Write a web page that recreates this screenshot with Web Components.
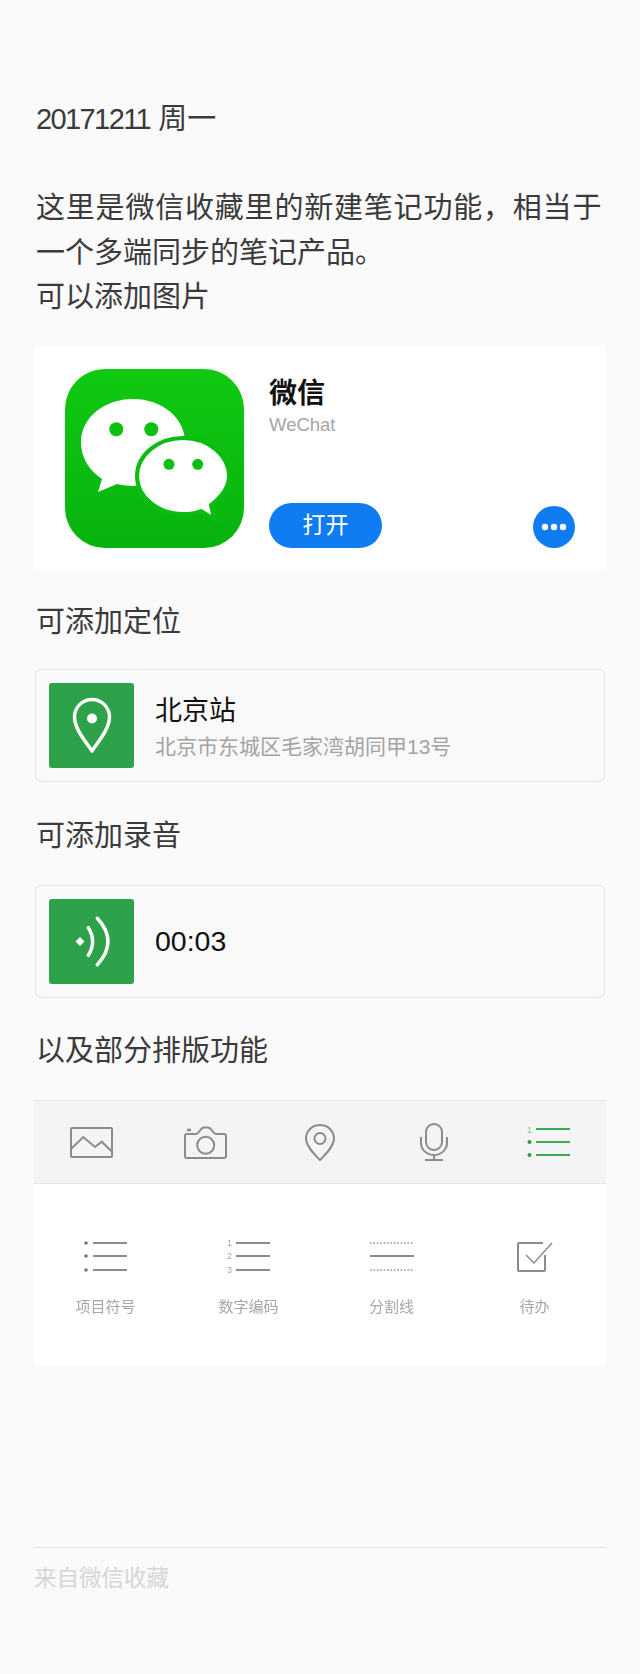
<!DOCTYPE html>
<html lang="zh">
<head>
<meta charset="utf-8">
<title>笔记</title>
<style>
    html, body {
        margin: 0;
        background: #fafafa;
    }
    body {
        font-family: "Liberation Sans", "Noto Sans CJK SC", sans-serif;
    }
</style>
</head>
<body>
<note-page>
    <note-text class="intro"><span class="digits">20171211</span> 周一<br><br><span class="wide">这里是微信收藏里的新建笔记功能，相当于</span><br>一个多端同步的笔记产品。<br>可以添加图片</note-text>
    <app-card name="微信" sub="WeChat" action="打开"></app-card>
    <note-text class="place">可添加定位</note-text>
    <attach-card kind="place">
        <div class="title">北京站</div>
        <div class="sub">北京市东城区毛家湾胡同甲13号</div>
    </attach-card>
    <note-text>可添加录音</note-text>
    <attach-card kind="voice">
        <div class="title time">00:03</div>
    </attach-card>
    <note-text>以及部分排版功能</note-text>
    <format-panel></format-panel>
    <note-footer>来自微信收藏</note-footer>
</note-page>

<script>
class NotePage extends HTMLElement {
    constructor() {
        super();
        this.attachShadow({mode: 'open'});
        this.shadowRoot.innerHTML = `
            <style>
                :host {
                    display: flex;
                    flex-direction: column;
                    box-sizing: border-box;
                    width: 640px;
                    height: 1674px;
                    padding: 97px 34px 0;
                    background: #fafafa;
                }
            </style>
            <slot></slot>
        `;
    }
}

class NoteText extends HTMLElement {
    constructor() {
        super();
        this.attachShadow({mode: 'open'});
        this.shadowRoot.innerHTML = `
            <style>
                :host {
                    display: block;
                    margin: 31.5px 0 26.5px 2px;
                    font-size: 29px;
                    line-height: 44.5px;
                    color: #3a3a3a;
                    white-space: nowrap;
                }
                :host(.intro) {
                    margin: 0 0 25px 2px;
                }
                :host(.place) {
                    margin: 30px 0 25px 2px;
                }
                ::slotted(.digits) {
                    letter-spacing: -1.6px;
                }
                ::slotted(.wide) {
                    letter-spacing: 0.8px;
                }
            </style>
            <slot></slot>
        `;
    }
}

class AppCard extends HTMLElement {
    constructor() {
        super();
        this.attachShadow({mode: 'open'});
        this.shadowRoot.innerHTML = `
            <style>
                :host {
                    display: flex;
                    height: 225px;
                    box-sizing: border-box;
                    padding: 24px 0 0 31px;
                    gap: 25px;
                    background: #fff;
                }
                svg {
                    display: block;
                    flex: none;
                }
                .info {
                    display: flex;
                    flex-direction: column;
                    width: 306px;
                    height: 179px;
                }
                .name {
                    font-size: 28px;
                    line-height: 36px;
                    margin-top: 7px;
                    font-weight: 700;
                    color: #111;
                }
                .sub {
                    font-size: 18.5px;
                    line-height: 24px;
                    margin-top: 1px;
                    color: #a6a6a6;
                }
                .row {
                    display: flex;
                    justify-content: space-between;
                    align-items: flex-end;
                    margin-top: auto;
                }
                .open {
                    width: 113px;
                    height: 45px;
                    line-height: 45px;
                    border-radius: 23px;
                    background: #0f7cf2;
                    color: #fff;
                    font-size: 23px;
                    text-align: center;
                }
            </style>
            <svg width="179" height="179" viewBox="0 0 179 179">
                <defs>
                    <linearGradient id="g" x1="0" y1="0" x2="0" y2="1">
                        <stop offset="0" stop-color="#10c912"/>
                        <stop offset="1" stop-color="#07b30e"/>
                    </linearGradient>
                </defs>
                <rect width="179" height="179" rx="40" fill="url(#g)"/>
                <path fill="#fff" d="M68 30C39 30 16 49 16 73C16 89 24 101 37 110L33 123L52 115C57 116 63 117 68 117C95 117 120 98 120 73C120 49 97 30 68 30Z"/>
                <path fill="#fff" stroke="#0bbd12" stroke-width="4" d="M118 69C93 69 72 86 72 107C72 128 93 145 118 145C125 145 131 144 136 142L149 150L146 136C155 129 164 119 164 107C164 86 143 69 118 69Z"/>
                <circle cx="51.3" cy="60.3" r="7" fill="#0cc012"/>
                <circle cx="86.3" cy="60.3" r="7" fill="#0cc012"/>
                <circle cx="104" cy="95.3" r="5.5" fill="#0cc012"/>
                <circle cx="132.7" cy="95.3" r="5.5" fill="#0cc012"/>
            </svg>
            <div class="info">
                <div class="name"></div>
                <div class="sub"></div>
                <div class="row">
                    <div class="open"></div>
                    <svg width="42" height="42" viewBox="0 0 42 42">
                        <circle cx="21" cy="21" r="21" fill="#0f7cf2"/>
                        <circle cx="12" cy="21" r="3.2" fill="#fff"/>
                        <circle cx="21" cy="21" r="3.2" fill="#fff"/>
                        <circle cx="30" cy="21" r="3.2" fill="#fff"/>
                    </svg>
                </div>
            </div>
        `;
    }

    connectedCallback() {
        this.shadowRoot.querySelector('.name').textContent = this.getAttribute('name');
        this.shadowRoot.querySelector('.sub').textContent = this.getAttribute('sub');
        this.shadowRoot.querySelector('.open').textContent = this.getAttribute('action');
    }
}

const attachIcons = {
    place: `<path d="M43 68C37 59 25.500 46 25.500 34A17.500 17.500 0 0 1 60.500 34C60.500 46 49 59 43 68Z" fill="none" stroke="#fff" stroke-width="3.500" stroke-linejoin="round"/>
            <circle cx="43" cy="35.500" r="5" fill="#fff"/>`,
    voice: `<path d="M31 38L35.500 42.500L31 47L26.500 42.500Z" fill="#fff"/>
            <path d="M39.300 28.700Q48 42.500 39.300 56.300" fill="none" stroke="#fff" stroke-width="3.500" stroke-linecap="round"/>
            <path d="M48.300 19.300Q69.700 42.500 48.300 65.700" fill="none" stroke="#fff" stroke-width="3.500" stroke-linecap="round"/>`
};

class AttachCard extends HTMLElement {
    constructor() {
        super();
        this.attachShadow({mode: 'open'});
        this.shadowRoot.innerHTML = `
            <style>
                :host {
                    display: flex;
                    align-items: center;
                    gap: 21px;
                    box-sizing: border-box;
                    height: 113px;
                    margin: 0 1px 0 1px;
                    padding: 0 13px;
                    border: 1.5px solid #e6e6e6;
                    border-radius: 6px;
                    background: #f9f9f9;
                }
                svg {
                    display: block;
                    flex: none;
                    width: 85px;
                    height: 85px;
                    border-radius: 3px;
                    background: #2ea14b;
                }
                ::slotted(.title) {
                    font-size: 27px;
                    line-height: 36px;
                    margin-top: 3px;
                    color: #111;
                }
                ::slotted(.time) {
                    font-size: 28.500px;
                    margin-top: 0;
                }
                ::slotted(.sub) {
                    font-size: 21px;
                    line-height: 30px;
                    margin-top: 3px;
                    color: #a3a3a3;
                }
            </style>
            <svg viewBox="0 0 85 85"></svg>
            <div><slot></slot></div>
        `;
    }

    connectedCallback() {
        this.shadowRoot.querySelector('svg').innerHTML = attachIcons[this.getAttribute('kind')];
    }
}

class FormatPanel extends HTMLElement {
    constructor() {
        super();
        this.attachShadow({mode: 'open'});
        this.shadowRoot.innerHTML = `
            <style>
                :host {
                    display: block;
                }
                svg {
                    display: block;
                    fill: none;
                    stroke: #8c8c8c;
                    stroke-width: 2;
                    filter: blur(0.35px);
                }
                svg text {
                    stroke: none;
                    fill: #a5a5a5;
                    font-size: 9px;
                }
                .tools {
                    display: grid;
                    grid-template-columns: repeat(5, 1fr);
                    box-sizing: border-box;
                    height: 84px;
                    background: #f4f4f6;
                    border-top: 1.5px solid #e8e8e8;
                    border-bottom: 1.5px solid #e8e8e8;
                }
                .tools div {
                    display: flex;
                    align-items: center;
                    justify-content: center;
                }
                .kinds {
                    display: grid;
                    grid-template-columns: repeat(4, 1fr);
                    height: 182px;
                    background: #fff;
                }
                .kinds div {
                    display: flex;
                    flex-direction: column;
                    align-items: center;
                    padding-top: 56px;
                    gap: 25px;
                    font-size: 15px;
                    line-height: 20px;
                    color: #a6a6a6;
                }
                .kinds span {
                    filter: blur(0.35px);
                }
                .numbered {
                    margin: -4px 0;
                }
            </style>
            <div class="tools">
                <div><svg width="43" height="31" viewBox="0 0 43 31">
                    <rect x="1" y="1" width="41" height="29" rx="1"/>
                    <path d="M1 22L13.300 10L25 20L31.700 14.700L42 24.700"/>
                </svg></div>
                <div><svg width="43" height="33" viewBox="0 0 43 33">
                    <path d="M3 8H12C14 8 15 6 16 4.500C17 3 18 1.500 20 1.500H24C26 1.500 27 3 28 4.500C29 6 30 8 32 8H40Q42 8 42 10V30Q42 32 40 32H3Q1 32 1 30V10Q1 8 3 8Z"/>
                    <circle cx="21.700" cy="19.300" r="8.500"/>
                    <path d="M3 4H7" stroke-width="2.500"/>
                </svg></div>
                <div><svg width="30" height="37" viewBox="0 0 30 37">
                    <path d="M15 36C9 30 1 22 1 14.500C1 7 7 1 15 1C23 1 29 7 29 14.500C29 22 21 30 15 36Z"/>
                    <circle cx="15" cy="14.500" r="5.500"/>
                </svg></div>
                <div><svg width="28" height="38" viewBox="0 0 28 38">
                    <rect x="6" y="1" width="16" height="26" rx="8"/>
                    <path d="M1 14V20C1 27 7 32 14 32C21 32 27 27 27 20V14M14 32V37M5 37H23"/>
                </svg></div>
                <div><svg width="43" height="37" viewBox="0 -2 43 37" style="stroke:#3cab52">
                    <path d="M9 3H43M9 16H43M9 29H43"/>
                    <text x="0" y="7" style="fill:#7cc78a">1</text>
                    <circle cx="2.500" cy="16" r="2" fill="#2f9e44" stroke="none"/>
                    <circle cx="2.500" cy="29" r="2" fill="#2f9e44" stroke="none"/>
                </svg></div>
            </div>
            <div class="kinds">
                <div>
                    <svg width="43" height="32" viewBox="0 0 43 32">
                        <path d="M9 3H43M9 16H43M9 30H43"/>
                        <circle cx="2" cy="3" r="1.800" fill="#777" stroke="none"/>
                        <circle cx="2" cy="16" r="1.800" fill="#777" stroke="none"/>
                        <circle cx="2" cy="30" r="1.800" fill="#777" stroke="none"/>
                    </svg>
                    <span>项目符号</span>
                </div>
                <div>
                    <svg class="numbered" width="43" height="40" viewBox="0 -4 43 40">
                        <path d="M9 3H43M9 16H43M9 30H43"/>
                        <text x="0" y="6">1</text>
                        <text x="0" y="19">2</text>
                        <text x="0" y="33">3</text>
                    </svg>
                    <span>数字编码</span>
                </div>
                <div>
                    <svg width="44" height="32" viewBox="0 0 44 32">
                        <path d="M0 3H44M0 30H44" stroke="#999" stroke-dasharray="1.700 1.700" stroke-width="1.500"/>
                        <path d="M0 16H44"/>
                    </svg>
                    <span>分割线</span>
                </div>
                <div>
                    <svg width="36" height="32" viewBox="0 0 36 32">
                        <path d="M26 3H2Q1 3 1 4V30Q1 31 2 31H27Q28 31 28 30V15"/>
                        <path d="M9 15L17 23L35 3" stroke-width="1.500"/>
                    </svg>
                    <span>待办</span>
                </div>
            </div>
        `;
    }
}

class NoteFooter extends HTMLElement {
    constructor() {
        super();
        this.attachShadow({mode: 'open'});
        this.shadowRoot.innerHTML = `
            <style>
                :host {
                    display: block;
                    margin-top: 181px;
                    padding-top: 16px;
                    border-top: 1.5px solid #e4e4e4;
                    font-size: 22.500px;
                    line-height: 30px;
                    color: #d6d6d6;
                }
            </style>
            <slot></slot>
        `;
    }
}

customElements.define('note-page', NotePage);
customElements.define('note-text', NoteText);
customElements.define('app-card', AppCard);
customElements.define('attach-card', AttachCard);
customElements.define('format-panel', FormatPanel);
customElements.define('note-footer', NoteFooter);
</script>
</body>
</html>
